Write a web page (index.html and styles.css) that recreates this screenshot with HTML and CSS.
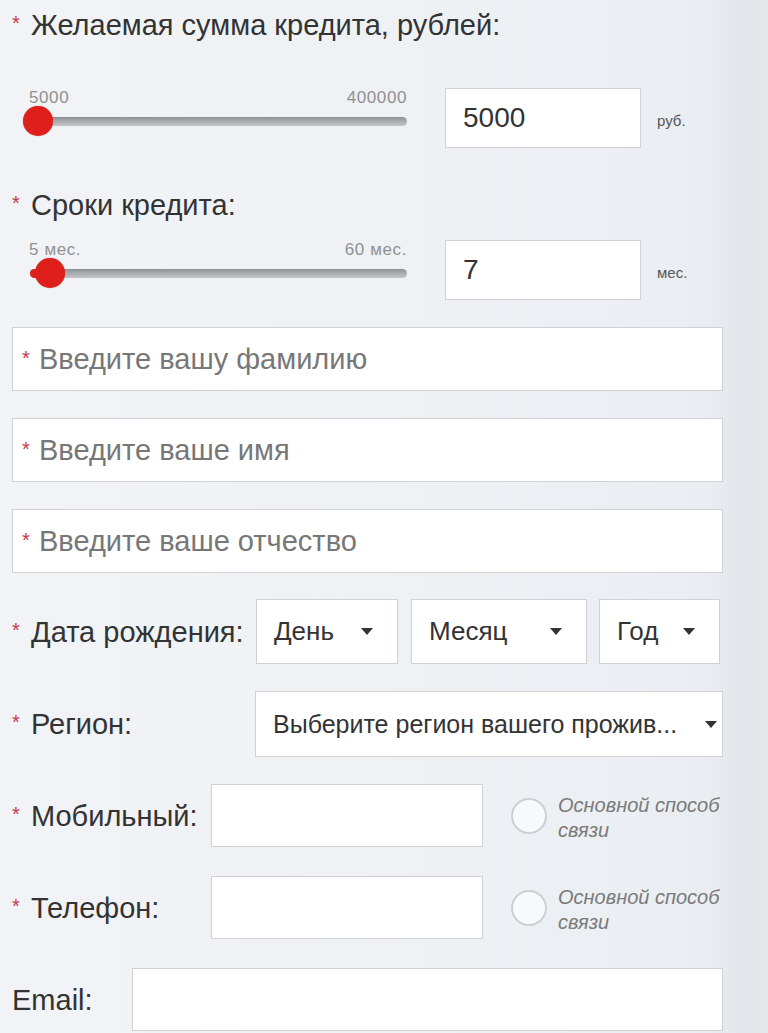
FILE: index.html
```html
<!DOCTYPE html>
<html lang="ru">
<head>
<meta charset="utf-8">
<title>Заявка на кредит</title>
<link rel="stylesheet" href="styles.css">
</head>
<body>
<form class="form">
  <div class="title"><span class="req">*</span>Желаемая сумма кредита, рублей:</div>
  <div class="range-row range-row--first">
    <div class="slider">
      <div class="ticks"><span>5000</span><span>400000</span></div>
      <div class="track">
        <span class="thumb thumb--sum"></span>
      </div>
    </div>
    <div class="num-box">5000</div>
    <span class="unit">руб.</span>
  </div>

  <div class="title title--second"><span class="req">*</span>Сроки кредита:</div>
  <div class="range-row range-row--second">
    <div class="slider">
      <div class="ticks"><span>5 мес.</span><span>60 мес.</span></div>
      <div class="track">
        <span class="fill fill--term"></span>
        <span class="thumb thumb--term"></span>
      </div>
    </div>
    <div class="num-box">7</div>
    <span class="unit">мес.</span>
  </div>

  <div class="text-box text-box--first"><span class="req req--small">*</span>Введите вашу фамилию</div>
  <div class="text-box"><span class="req req--small">*</span>Введите ваше имя</div>
  <div class="text-box"><span class="req req--small">*</span>Введите ваше отчество</div>

  <div class="row row--date">
    <div class="label label--date"><span class="req">*</span>Дата рождения:</div>
    <div class="select select--day"><span class="select-text">День</span><span class="arrow"></span></div>
    <div class="select select--month"><span class="select-text">Месяц</span><span class="arrow"></span></div>
    <div class="select select--year"><span class="select-text">Год</span><span class="arrow"></span></div>
  </div>

  <div class="row row--region">
    <div class="label label--region"><span class="req">*</span>Регион:</div>
    <div class="select select--region"><span class="select-text">Выберите регион вашего прожив...</span><span class="arrow"></span></div>
  </div>

  <div class="row row--phone">
    <div class="label label--phone"><span class="req">*</span>Мобильный:</div>
    <div class="field field--phone"></div>
    <span class="radio"></span>
    <span class="radio-text">Основной способ<br>связи</span>
  </div>

  <div class="row row--phone row--tel">
    <div class="label label--phone"><span class="req">*</span>Телефон:</div>
    <div class="field field--phone"></div>
    <span class="radio"></span>
    <span class="radio-text">Основной способ<br>связи</span>
  </div>

  <div class="row row--email">
    <div class="label label--email">Email:</div>
    <div class="field field--email"></div>
  </div>
</form>
</body>
</html>
```

FILE: styles.css
```css
html, body {
  margin: 0;
  padding: 0;
}

body {
  width: 768px;
  height: 1033px;
  overflow: hidden;
  background: linear-gradient(to right, #f1f3f6 0%, #eef1f4 60%, #eaedf1 92%, #e2e5e9 97%, #e6e8eb 100%);
  font-family: "Liberation Sans", Arial, sans-serif;
  color: #333;
}

.form {
  padding: 8px 0 0 12px;
  width: 711px;
}

.req {
  display: inline-block;
  width: 19px;
  color: #c8374a;
  font-size: 20px;
  vertical-align: top;
  line-height: 20px;
  padding-top: 5px;
}

.req--small {
  width: 17px;
}

.title {
  font-size: 29px;
  line-height: 34px;
  height: 34px;
  white-space: nowrap;
}

.title--second {
  margin-top: 40px;
}

.range-row {
  display: flex;
  align-items: flex-start;
}

.range-row--first {
  margin-top: 46px;
}

.range-row--second {
  margin-top: 18px;
}

.slider {
  width: 395px;
  padding-top: 1px;
}

.ticks {
  display: flex;
  justify-content: space-between;
  padding-left: 17px;
  font-size: 17px;
  letter-spacing: 0.6px;
  line-height: 18px;
  color: #909090;
}

.track {
  position: relative;
  margin: 10px 0 0 18px;
  height: 9px;
  border-radius: 5px;
  background: linear-gradient(to bottom, #8d9093 0%, #a9acaf 45%, #c4c7ca 100%);
}

.thumb {
  position: absolute;
  top: -11px;
  width: 30px;
  height: 30px;
  border-radius: 50%;
  background: #df1f1c;
  box-shadow: 0 0 1px rgba(180, 20, 20, 0.6);
}

.thumb--sum {
  left: -7px;
}

.thumb--term {
  left: 5px;
}

.fill {
  position: absolute;
  left: 0;
  top: 0;
  height: 9px;
  border-radius: 5px 0 0 5px;
  background: #df1f1c;
}

.fill--term {
  width: 20px;
}

.num-box {
  margin-left: 38px;
  width: 196px;
  height: 60px;
  box-sizing: border-box;
  border: 1px solid #cfd1d4;
  background: #fff;
  padding-left: 17px;
  font-size: 28px;
  line-height: 58px;
  color: #333;
}

.unit {
  align-self: center;
  margin: 4px 0 0 16px;
  font-size: 15px;
  color: #555;
}

.text-box {
  margin-top: 27px;
  height: 64px;
  box-sizing: border-box;
  border: 1px solid #cfd1d4;
  background: #fff;
  padding-left: 9px;
  font-size: 29px;
  line-height: 62px;
  color: #777;
}

.text-box .req {
  line-height: 20px;
  padding-top: 20px;
}

.text-box--first {
  margin-top: 27px;
}

.row {
  display: flex;
  align-items: center;
}

.row--date {
  margin-top: 26px;
  height: 65px;
}

.row--region {
  margin-top: 27px;
  height: 66px;
}

.row--phone {
  margin-top: 27px;
  height: 63px;
}

.row--tel {
  margin-top: 29px;
}

.row--email {
  margin-top: 29px;
  height: 63px;
}

.label {
  font-size: 29px;
  line-height: 34px;
  white-space: nowrap;
  color: #333;
}

.label--date { width: 244px; }
.label--region { width: 243px; }
.label--phone { width: 199px; }
.label--email { width: 120px; }

.select {
  display: flex;
  align-items: center;
  justify-content: space-between;
  height: 100%;
  box-sizing: border-box;
  border: 1px solid #cfd1d4;
  background: #fff;
  padding: 0 24px 0 17px;
  font-size: 26px;
  color: #333;
}

.select-text {
  white-space: nowrap;
}

.arrow {
  flex: none;
  width: 0;
  height: 0;
  border-left: 6px solid transparent;
  border-right: 6px solid transparent;
  border-top: 7px solid #333;
}

.select--day { width: 142px; }
.select--month { width: 176px; margin-left: 13px; }
.select--year { width: 121px; margin-left: 12px; }

.select--region {
  width: 468px;
  padding-right: 5px;
  font-size: 25px;
}

.select--region .arrow {
  margin-left: 2px;
}

.field {
  height: 100%;
  box-sizing: border-box;
  border: 1px solid #cfd1d4;
  background: #fff;
}

.field--phone { width: 272px; }
.field--email { width: 591px; }

.radio {
  flex: none;
  margin-left: 28px;
  width: 36px;
  height: 36px;
  box-sizing: border-box;
  border-radius: 50%;
  border: 2px solid #cdd0d3;
  background: #f8f9fa;
}

.radio-text {
  margin-left: 11px;
  font-size: 20px;
  line-height: 25px;
  font-style: italic;
  color: #7a7a7a;
  margin-top: 4px;
  white-space: nowrap;
}
```
